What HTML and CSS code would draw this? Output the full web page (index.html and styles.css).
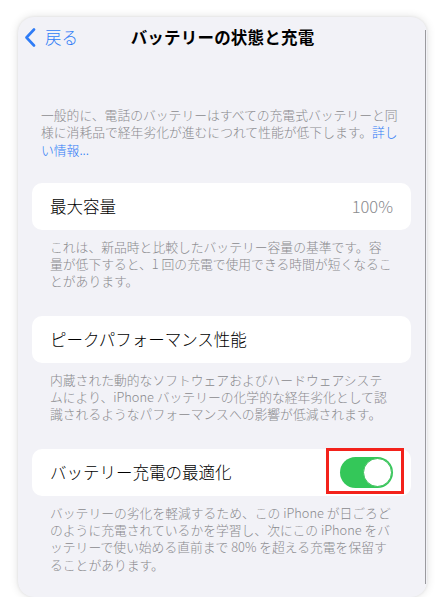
FILE: index.html
```html
<!DOCTYPE html>
<html lang="ja">
<head>
    <meta charset="UTF-8">
    <meta name="viewport" content="width=device-width, initial-scale=1.0">
    <title>バッテリーの状態と充電</title>
    <link rel="stylesheet" href="styles.css">
</head>
<body>
    <div class="screen">
        <div class="nav-bar">
            <a href="#" class="back-link">
                <svg class="chevron" width="12" height="19" viewBox="0 0 12 19">
                    <path d="M10 1.5 L2.5 9.5 L10 17.5" fill="none" stroke="currentColor" stroke-width="2.6" stroke-linecap="round" stroke-linejoin="round"/>
                </svg>
                <span>戻る</span>
            </a>
            <h1 class="nav-title">バッテリーの状態と充電</h1>
        </div>

        <p class="intro">一般的に、電話のバッテリーはすべての充電式バッテリーと同<br>様に消耗品で経年劣化が進むにつれて性能が低下します。<a href="#">詳し<br>い情報...</a></p>

        <div class="group">
            <div class="row">
                <span class="row-label">最大容量</span>
                <span class="row-value">100%</span>
            </div>
        </div>
        <p class="footnote">これは、新品時と比較したバッテリー容量の基準です。容<br>量が低下すると、1 回の充電で使用できる時間が短くなるこ<br>とがあります。</p>

        <div class="group">
            <div class="row">
                <span class="row-label">ピークパフォーマンス性能</span>
            </div>
        </div>
        <p class="footnote">内蔵された動的なソフトウェアおよびハードウェアシステ<br>ムにより、iPhone バッテリーの化学的な経年劣化として認<br>識されるようなパフォーマンスへの影響が低減されます。</p>

        <div class="group">
            <div class="row">
                <span class="row-label">バッテリー充電の最適化</span>
                <span class="switch-wrap">
                    <span class="switch is-on"><span class="knob"></span></span>
                    <span class="highlight"></span>
                </span>
            </div>
        </div>
        <p class="footnote">バッテリーの劣化を軽減するため、この iPhone が日ごろど<br>のように充電されているかを学習し、次にこの iPhone をバ<br>ッテリーで使い始める直前まで 80% を超える充電を保留す<br>ることがあります。</p>
    </div>
</body>
</html>
```

FILE: styles.css
```css
body {
    margin: 0;
    padding: 0;
    background-color: #fff;
    font-family: "Noto Sans CJK JP", "Noto Sans", sans-serif;
    font-weight: 300;
    color: #000;
}
.screen {
    position: relative;
    box-sizing: border-box;
    width: 409px;
    height: 580px;
    margin: 17px 0 0 18px;
    background-color: #f2f2f7;
    border-radius: 16px;
    box-shadow: 0 0 10px rgba(0, 0, 0, 0.12), 0 0 3px rgba(0, 0, 0, 0.08);
    overflow: hidden;
}
.screen::after {
    content: "";
    position: absolute;
    right: 1px;
    top: 13px;
    bottom: 13px;
    width: 1px;
    background-color: #9a9a9e;
}
.nav-bar {
    position: relative;
    height: 40px;
    display: flex;
    align-items: center;
    justify-content: center;
}
.back-link {
    position: absolute;
    left: 6px;
    top: 0;
    height: 40px;
    display: flex;
    align-items: center;
    gap: 9px;
    color: #2f7cf6;
    text-decoration: none;
    font-size: 16.5px;
}
.chevron {
    display: block;
}
.nav-title {
    margin: 0;
    font-size: 16.5px;
    font-weight: 600;
    letter-spacing: 0.2px;
}
.intro {
    margin: 49px 0 0 23px;
    font-size: 12.8px;
    line-height: 17.3px;
    color: #8a8a8e;
}
.intro a {
    color: #2f7cf6;
    text-decoration: none;
}
.group {
    margin: 26px 16px 0 14px;
    background-color: #fff;
    border-radius: 10px;
}
.intro + .group {
    margin-top: 25px;
}
.row {
    display: flex;
    align-items: center;
    justify-content: space-between;
    height: 47px;
    padding: 0 18px;
}
.row-label {
    font-size: 16.5px;
}
.row-value {
    font-size: 16.5px;
    color: #8a8a8e;
}
.footnote {
    margin: 0;
    padding: 8px 0 0 32px;
    font-size: 12.8px;
    line-height: 17.3px;
    color: #8a8a8e;
}
.switch-wrap {
    position: relative;
    display: block;
}
.switch {
    display: block;
    width: 53px;
    height: 31px;
    border-radius: 16px;
    background-color: #34c759;
    position: relative;
}
.knob {
    position: absolute;
    top: 1px;
    right: 1px;
    width: 27px;
    height: 27px;
    border-radius: 50%;
    background-color: #fff;
    border: 1px solid #3cc05a;
}
.highlight {
    position: absolute;
    left: -14px;
    right: -11px;
    top: -9px;
    bottom: -6px;
    border: 3px solid #f3221b;
}
```
